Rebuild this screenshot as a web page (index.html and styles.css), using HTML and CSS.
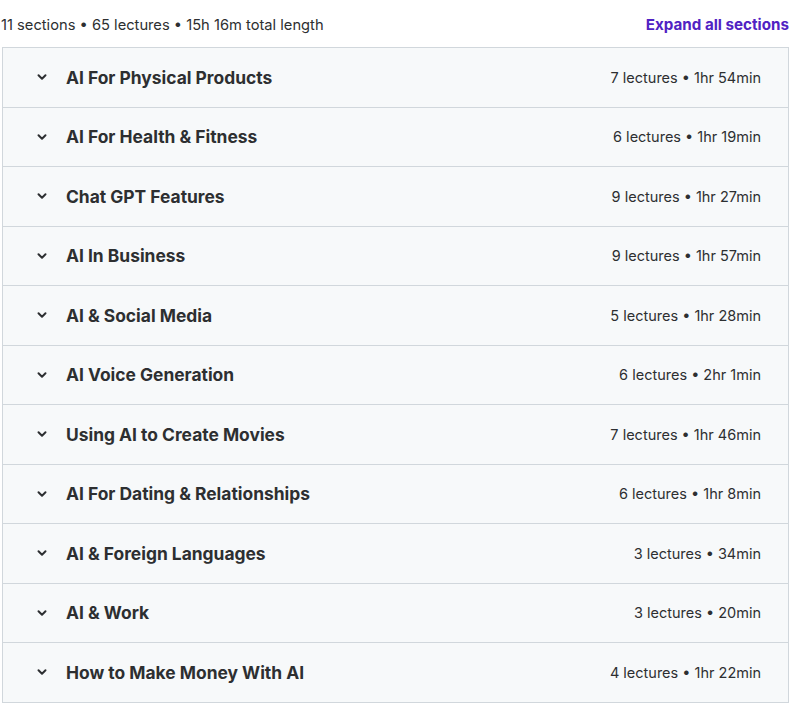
FILE: index.html
```html
<!DOCTYPE html>
<html lang="en">
<head>
    <meta charset="UTF-8">
    <title>Course content</title>
    <link rel="stylesheet" href="styles.css">
</head>
<body>
    <div class="curriculum">
        <div class="curriculum-header">
            <span class="summary">11 sections • 65 lectures • 15h 16m total length</span>
            <button class="expand-btn">Expand all sections</button>
        </div>

        <div class="sections">
            <div class="section">
                <span class="chevron"><svg width="14" height="14" viewBox="0 0 24 24"><path d="M6 9l6 6 6-6" fill="none" stroke="currentColor" stroke-width="3.4" stroke-linecap="round" stroke-linejoin="round"/></svg></span>
                <span class="section-title">AI For Physical Products</span>
                <span class="section-meta">7 lectures • 1hr 54min</span>
            </div>
            <div class="section">
                <span class="chevron"><svg width="14" height="14" viewBox="0 0 24 24"><path d="M6 9l6 6 6-6" fill="none" stroke="currentColor" stroke-width="3.4" stroke-linecap="round" stroke-linejoin="round"/></svg></span>
                <span class="section-title">AI For Health &amp; Fitness</span>
                <span class="section-meta">6 lectures • 1hr 19min</span>
            </div>
            <div class="section">
                <span class="chevron"><svg width="14" height="14" viewBox="0 0 24 24"><path d="M6 9l6 6 6-6" fill="none" stroke="currentColor" stroke-width="3.4" stroke-linecap="round" stroke-linejoin="round"/></svg></span>
                <span class="section-title">Chat GPT Features</span>
                <span class="section-meta">9 lectures • 1hr 27min</span>
            </div>
            <div class="section">
                <span class="chevron"><svg width="14" height="14" viewBox="0 0 24 24"><path d="M6 9l6 6 6-6" fill="none" stroke="currentColor" stroke-width="3.4" stroke-linecap="round" stroke-linejoin="round"/></svg></span>
                <span class="section-title">AI In Business</span>
                <span class="section-meta">9 lectures • 1hr 57min</span>
            </div>
            <div class="section">
                <span class="chevron"><svg width="14" height="14" viewBox="0 0 24 24"><path d="M6 9l6 6 6-6" fill="none" stroke="currentColor" stroke-width="3.4" stroke-linecap="round" stroke-linejoin="round"/></svg></span>
                <span class="section-title">AI &amp; Social Media</span>
                <span class="section-meta">5 lectures • 1hr 28min</span>
            </div>
            <div class="section">
                <span class="chevron"><svg width="14" height="14" viewBox="0 0 24 24"><path d="M6 9l6 6 6-6" fill="none" stroke="currentColor" stroke-width="3.4" stroke-linecap="round" stroke-linejoin="round"/></svg></span>
                <span class="section-title">AI Voice Generation</span>
                <span class="section-meta">6 lectures • 2hr 1min</span>
            </div>
            <div class="section">
                <span class="chevron"><svg width="14" height="14" viewBox="0 0 24 24"><path d="M6 9l6 6 6-6" fill="none" stroke="currentColor" stroke-width="3.4" stroke-linecap="round" stroke-linejoin="round"/></svg></span>
                <span class="section-title">Using AI to Create Movies</span>
                <span class="section-meta">7 lectures • 1hr 46min</span>
            </div>
            <div class="section">
                <span class="chevron"><svg width="14" height="14" viewBox="0 0 24 24"><path d="M6 9l6 6 6-6" fill="none" stroke="currentColor" stroke-width="3.4" stroke-linecap="round" stroke-linejoin="round"/></svg></span>
                <span class="section-title">AI For Dating &amp; Relationships</span>
                <span class="section-meta">6 lectures • 1hr 8min</span>
            </div>
            <div class="section">
                <span class="chevron"><svg width="14" height="14" viewBox="0 0 24 24"><path d="M6 9l6 6 6-6" fill="none" stroke="currentColor" stroke-width="3.4" stroke-linecap="round" stroke-linejoin="round"/></svg></span>
                <span class="section-title">AI &amp; Foreign Languages</span>
                <span class="section-meta">3 lectures • 34min</span>
            </div>
            <div class="section">
                <span class="chevron"><svg width="14" height="14" viewBox="0 0 24 24"><path d="M6 9l6 6 6-6" fill="none" stroke="currentColor" stroke-width="3.4" stroke-linecap="round" stroke-linejoin="round"/></svg></span>
                <span class="section-title">AI &amp; Work</span>
                <span class="section-meta">3 lectures • 20min</span>
            </div>
            <div class="section">
                <span class="chevron"><svg width="14" height="14" viewBox="0 0 24 24"><path d="M6 9l6 6 6-6" fill="none" stroke="currentColor" stroke-width="3.4" stroke-linecap="round" stroke-linejoin="round"/></svg></span>
                <span class="section-title">How to Make Money With AI</span>
                <span class="section-meta">4 lectures • 1hr 22min</span>
            </div>
        </div>
    </div>
</body>
</html>
```

FILE: styles.css
```css
* {
    box-sizing: border-box;
    font-family: Inter, 'Noto Sans', sans-serif;
}

body {
    margin: 0;
    background-color: white;
    color: #2d2f31;
}

.curriculum {
    width: 790px;
    padding: 14px 1px 0 1px;
}

.curriculum-header {
    display: flex;
    justify-content: space-between;
    align-items: center;
    height: 21px;
    margin-bottom: 12px;
}

.summary {
    font-size: 14.7px;
    color: #2d2f31;
}

.expand-btn {
    background: none;
    border: none;
    padding: 0;
    font-size: 15.2px;
    font-weight: 700;
    color: #5022c3;
    cursor: pointer;
}

.sections {
    margin-left: 1px;
    border: 1px solid #d1d7dc;
    border-bottom: none;
}

.section {
    display: flex;
    align-items: center;
    height: 59.5px;
    padding: 0 27px 0 32px;
    background-color: #f7f9fa;
    border-bottom: 1px solid #d1d7dc;
}

.chevron {
    display: flex;
    width: 14px;
    margin-right: 17px;
    color: #2d2f31;
}

.section-title {
    flex: 1;
    font-size: 17.4px;
    font-weight: 700;
}

.section-meta {
    font-size: 14.5px;
}
```
